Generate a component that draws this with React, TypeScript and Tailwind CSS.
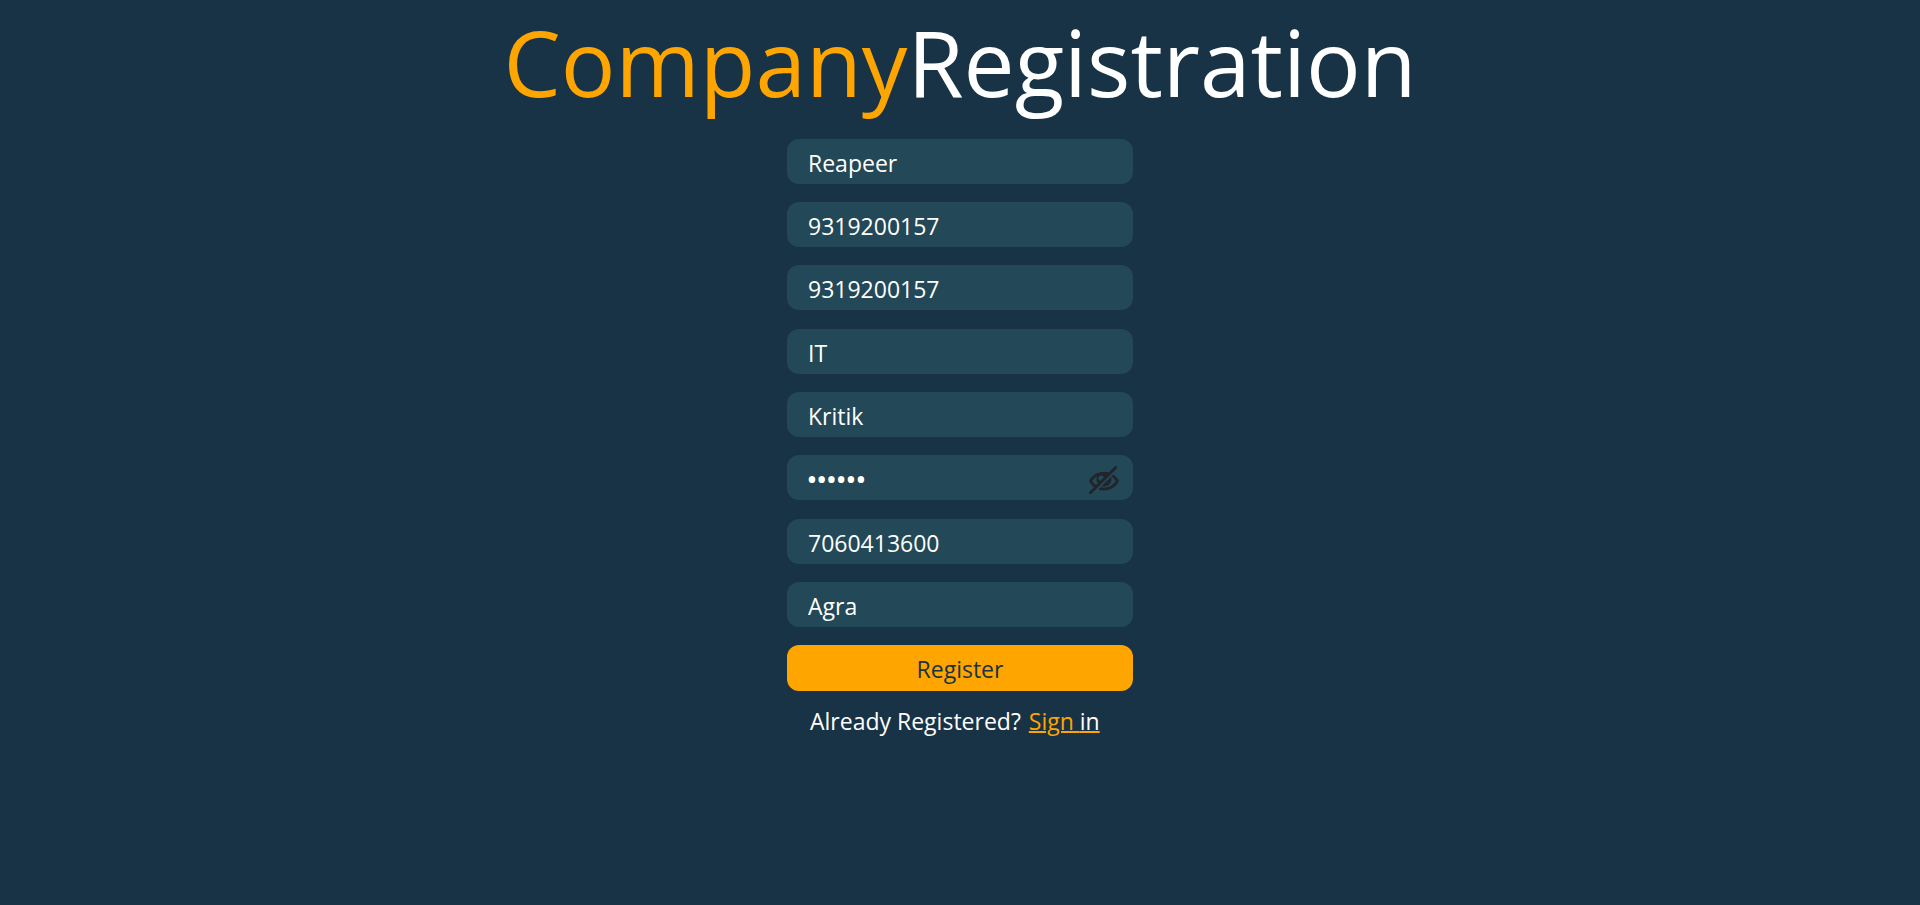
import { useState } from "react";
import type { FormEvent } from "react";
import { ImEye, ImEyeBlocked } from "react-icons/im";

type Field = { name: string; label: string; value: string; type?: string };

const companyFields: Field[] = [
  { name: "company", label: "Company name", value: "Reapeer" },
  { name: "contact", label: "Contact number", value: "9319200157", type: "tel" },
  { name: "whatsapp", label: "Alternate number", value: "9319200157", type: "tel" },
];

const accountFields: Field[] = [
  { name: "industry", label: "Industry", value: "IT" },
  { name: "username", label: "User name", value: "Kritik" },
  { name: "password", label: "Password", value: "123456", type: "password" },
];

const contactFields: Field[] = [
  { name: "phone", label: "Phone", value: "7060413600", type: "tel" },
  { name: "city", label: "City", value: "Agra" },
];

function TextField({ field }: { field: Field }) {
  const [visible, setVisible] = useState(false);
  const isPassword = field.type === "password";
  const type = isPassword && visible ? "text" : field.type ?? "text";

  return (
    <div className="relative">
      <input
        type={type}
        name={field.name}
        aria-label={field.label}
        defaultValue={field.value}
        className={`block h-[45px] w-full rounded-xl bg-[#234857] pt-0.5 text-white outline-none ${
          type === "password" ? "px-5 text-[26px] font-semibold" : "px-[21px] text-[23px]"
        }`}
      />
      {isPassword && (
        <button
          type="button"
          aria-label={visible ? "Hide password" : "Show password"}
          onClick={() => setVisible(!visible)}
          className="absolute inset-y-0 right-3.5 flex items-center pt-1.5 text-[#212529]"
        >
          {visible ? <ImEye size={30} /> : <ImEyeBlocked size={30} />}
        </button>
      )}
    </div>
  );
}

function FieldGroup({ fields }: { fields: Field[] }) {
  return (
    <div className="flex flex-col gap-[18px]">
      {fields.map((field) => (
        <TextField key={field.name} field={field} />
      ))}
    </div>
  );
}

export default function App() {
  const submit = (event: FormEvent) => event.preventDefault();

  return (
    <main className="flex min-h-screen flex-col items-center bg-[#193346] font-['Open_Sans',sans-serif] text-white">
      <h1 className="pt-0.5 text-[91px] leading-[120px]">
        <span className="text-[#ffa500]">Company</span>Registration
      </h1>
      <form onSubmit={submit} className="mt-[17px] flex w-full max-w-[346px] flex-col gap-[19px]">
        <FieldGroup fields={companyFields} />
        <FieldGroup fields={accountFields} />
        <div className="flex flex-col gap-[18px]">
          <FieldGroup fields={contactFields} />
          <button type="submit" className="h-[46px] rounded-xl bg-[#ffa500] pt-0.5 text-[23px] text-[#193346]">
            Register
          </button>
        </div>
      </form>
      <p className="mt-3 flex w-full max-w-[346px] gap-2 pl-[23px] text-[23px] leading-[36px] whitespace-nowrap">
        <span>Already Registered?</span>
        <a href="#signin" className="text-[#ffa500] underline decoration-[#ffa500] decoration-2">
          Sign <span className="text-white">in</span>
        </a>
      </p>
    </main>
  );
}
